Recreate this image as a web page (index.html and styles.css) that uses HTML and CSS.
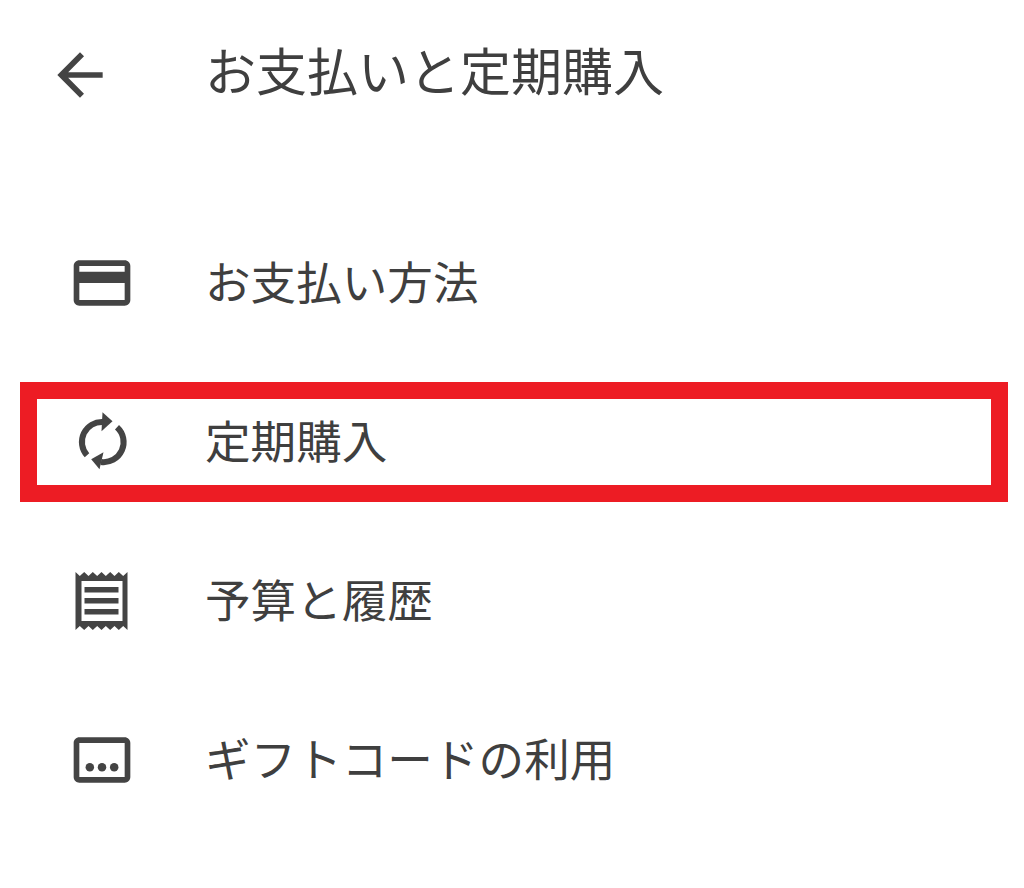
FILE: index.html
```html
<!DOCTYPE html>
<html lang="ja">
<head>
    <meta charset="UTF-8">
    <meta name="viewport" content="width=device-width, initial-scale=1.0">
    <title>お支払いと定期購入</title>
    <link rel="stylesheet" href="styles.css">
</head>
<body>
    <header class="top-bar">
        <svg class="icon" viewBox="0 0 24 24"><path d="M20 11H7.83l5.59-5.59L12 4l-8 8 8 8 1.41-1.41L7.83 13H20v-2z"/></svg>
        <h1 class="title">お支払いと定期購入</h1>
    </header>

    <ul class="menu">
        <li class="menu-item">
            <svg class="icon" viewBox="0 0 24 24"><path d="M20 4H4c-1.11 0-1.99.89-1.99 2L2 18c0 1.11.89 2 2 2h16c1.11 0 2-.89 2-2V6c0-1.11-.89-2-2-2zm0 14H4v-6h16v6zm0-10H4V6h16v2z"/></svg>
            <span class="label">お支払い方法</span>
        </li>
        <li class="menu-item menu-item-marked">
            <svg class="icon" viewBox="0 0 68 68">
                <path class="arc" d="M19 47.3A20 20 0 0 1 35 14"/>
                <path d="M34.5 4.3L44.5 13.3L33.5 23.3z"/>
                <path class="arc" d="M49 19.3A20 20 0 0 1 33 54"/>
                <path d="M23.2 51.3L31.5 61.3L35.5 44.3z"/>
            </svg>
            <span class="label">定期購入</span>
            <div class="highlight"></div>
        </li>
        <li class="menu-item">
            <svg class="icon" viewBox="0 0 68 68">
                <path fill-rule="evenodd" d="M7.5 5L11.8 9L16.2 5L20.5 9L24.8 5L29.2 9L33.5 5L37.8 9L42.2 5L46.5 9L50.8 5L55.2 9L59.5 5V63L55.2 59L50.8 63L46.5 59L42.2 63L37.8 59L33.5 63L29.2 59L24.8 63L20.5 59L16.2 63L11.8 59L7.5 63zM13.5 14V54H54.5V14zM16.5 20H50.5V25.5H16.5zM16.5 31H50.5V36.5H16.5zM16.5 42H50.5V47.5H16.5z"/>
            </svg>
            <span class="label">予算と履歴</span>
        </li>
        <li class="menu-item">
            <svg class="icon" viewBox="0 0 24 24">
                <path d="M20 4H4c-1.11 0-2 .89-2 2v12c0 1.11.89 2 2 2h16c1.11 0 2-.89 2-2V6c0-1.11-.89-2-2-2zm0 14H4V6h16v12z"/>
                <circle cx="7.7" cy="14.6" r="1.5"/>
                <circle cx="12" cy="14.6" r="1.5"/>
                <circle cx="16.3" cy="14.6" r="1.5"/>
            </svg>
            <span class="label">ギフトコードの利用</span>
        </li>
    </ul>
</body>
</html>
```

FILE: styles.css
```css
body {
    margin: 0;
    background-color: #fff;
    color: #3f3f3f;
    font-family: "Noto Sans CJK JP", "Noto Sans", sans-serif;
}

.icon {
    width: 68px;
    height: 68px;
    flex-shrink: 0;
    fill: #444;
}

.arc {
    fill: none;
    stroke: #444;
    stroke-width: 6;
}

.top-bar {
    display: flex;
    align-items: center;
    height: 150px;
    padding-left: 46px;
}

.title {
    margin: 0 0 10px 91px;
    font-size: 51px;
    font-weight: 400;
    line-height: 1.2;
}

.menu {
    list-style: none;
    margin: 53px 0 0;
    padding: 0;
}

.menu-item {
    position: relative;
    display: flex;
    align-items: center;
    height: 159px;
    padding-left: 68px;
}

.label {
    margin: 0 0 4px 69px;
    font-size: 45.6px;
    line-height: 1.2;
}

/* red box drawn over the row */
.highlight {
    position: absolute;
    left: 20px;
    right: 16px;
    top: 20px;
    height: 86px;
    border: 17px solid #ed1c24;
}
```
